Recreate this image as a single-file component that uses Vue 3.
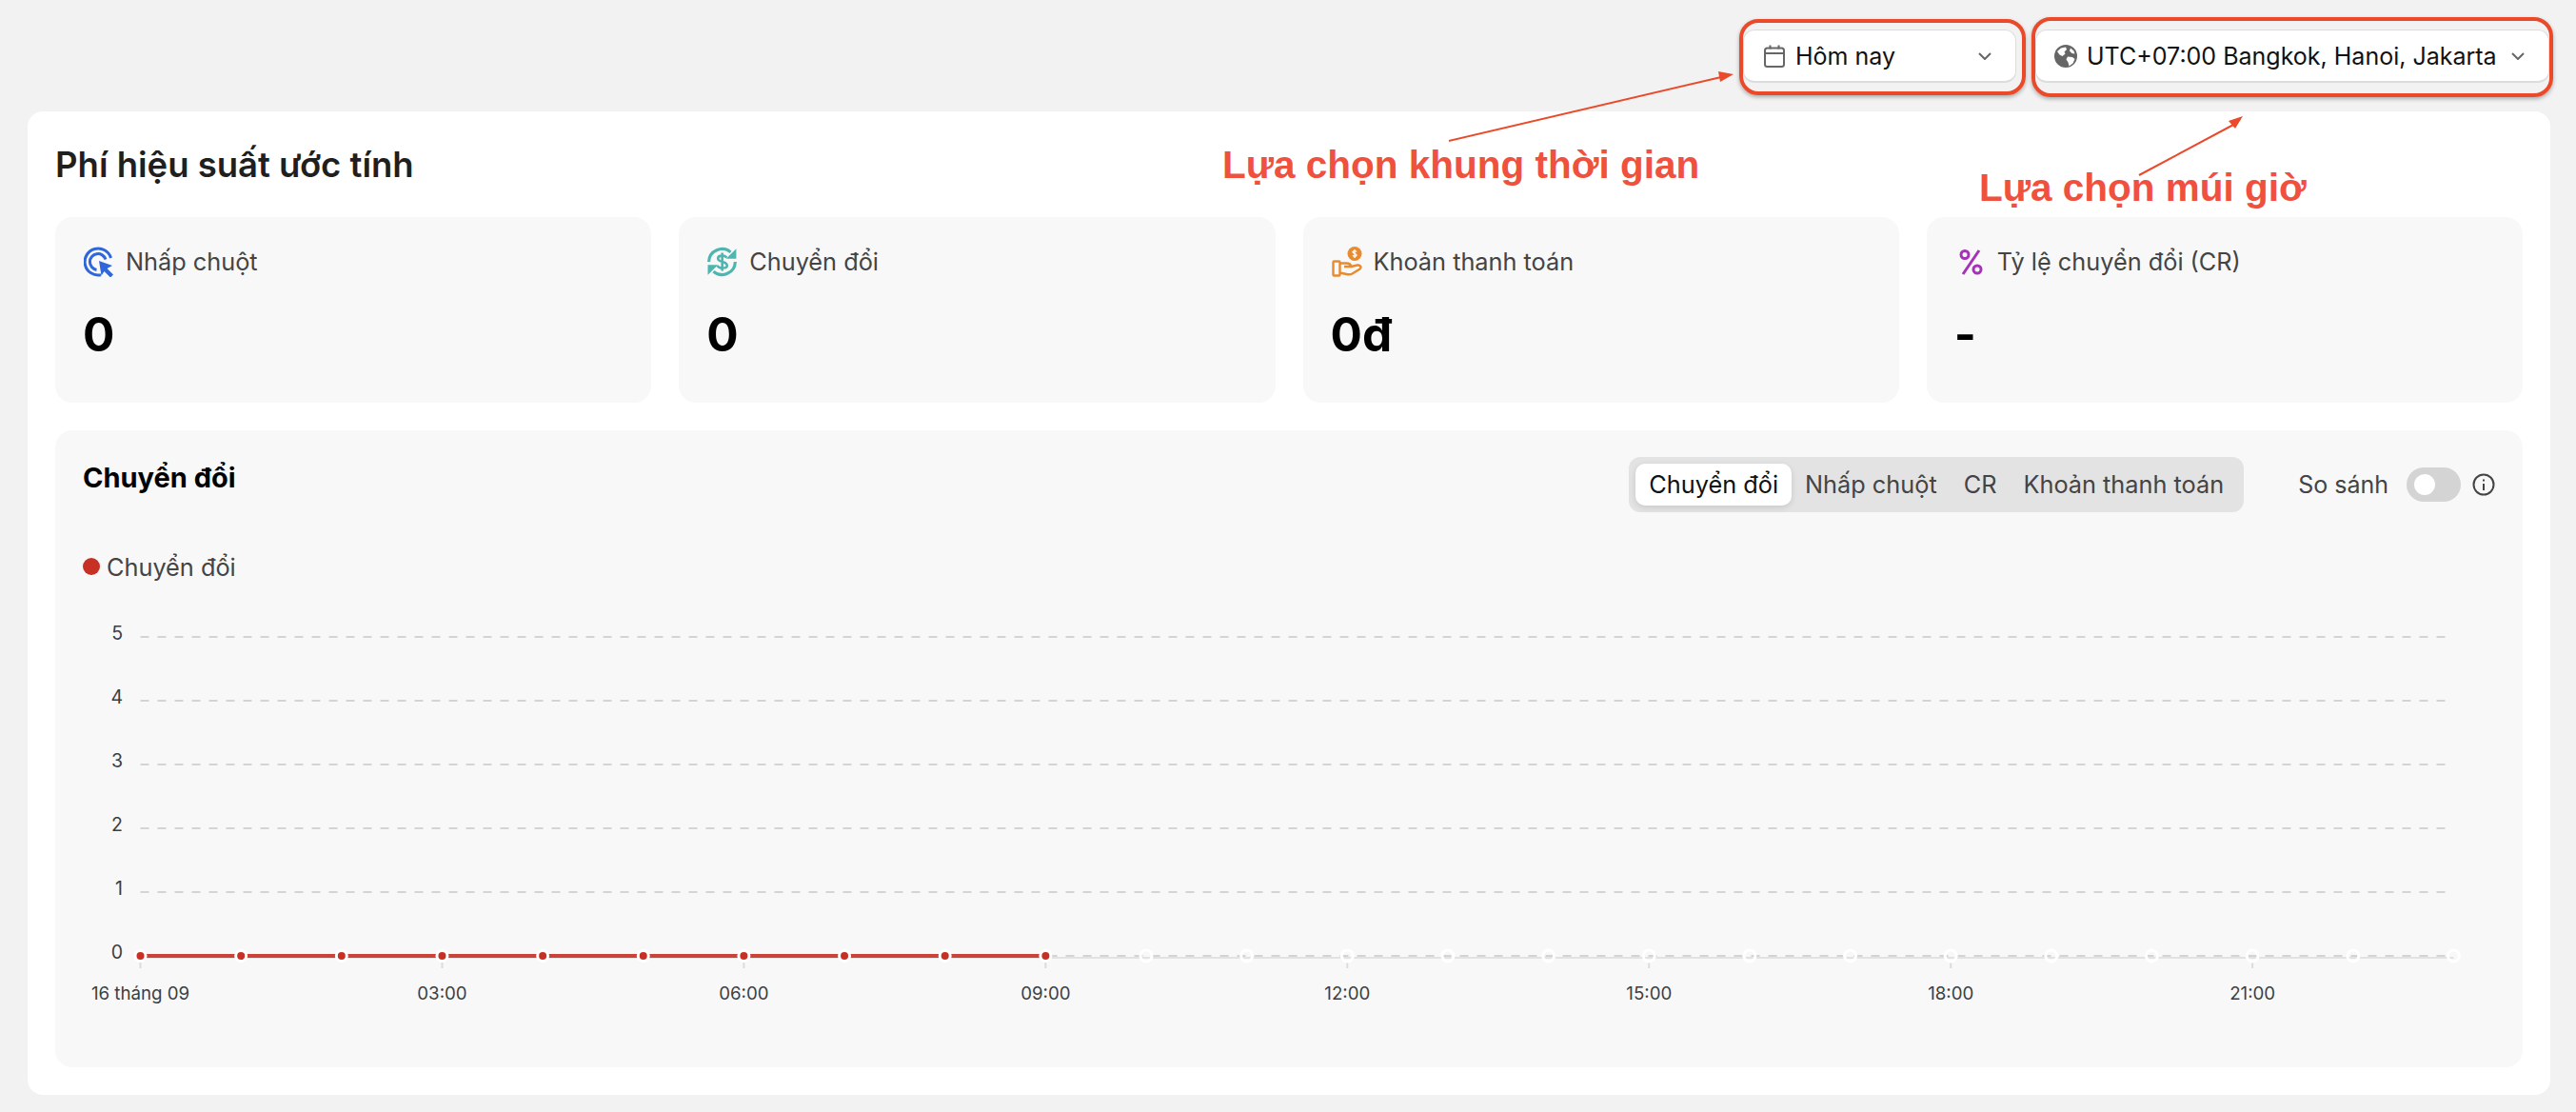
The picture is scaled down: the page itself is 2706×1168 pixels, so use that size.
<script setup>
import { computed } from 'vue';

const stats = [
  { key: 'click', label: 'Nhấp chuột', value: '0' },
  { key: 'convert', label: 'Chuyển đổi', value: '0' },
  { key: 'pay', label: 'Khoản thanh toán', value: '0đ' },
  { key: 'cr', label: 'Tỷ lệ chuyển đổi (CR)', value: '-' },
];

const tabs = ['Chuyển đổi', 'Nhấp chuột', 'CR', 'Khoản thanh toán'];

// chart geometry, in svg units
const plotLeft = 89.5;
const plotStep = 105.65;
const gridEnd = 2512;
const zeroY = 364;
const rowH = 67;
const filled = 10;

const rows = [5, 4, 3, 2, 1, 0].map((n) => ({ n, y: zeroY - n * rowH }));

const points = computed(() =>
  Array.from({ length: 24 }, (_, i) => ({
    i,
    x: plotLeft + i * plotStep,
    on: i < filled,
  })),
);

const ticks = computed(() =>
  points.value
    .filter((p) => p.i % 3 === 0)
    .map((p) => ({
      x: p.x,
      label: p.i === 0 ? '16 tháng 09' : `${String(p.i).padStart(2, '0')}:00`,
    })),
);

const redEnd = computed(() => plotLeft + (filled - 1) * plotStep);
const lastX = computed(() => plotLeft + 23 * plotStep);
</script>

<template>
  <div class="page">
    <header class="topbar">
      <button class="select select--range">
        <svg class="select__icon" viewBox="0 0 24 24" fill="none" stroke="#666" stroke-width="2">
          <rect x="2" y="3.500" width="20" height="19.500" rx="2.500" />
          <path d="M2 9h20M7.500 0.500v4M16.500 0.500v4" />
        </svg>
        <span class="select__text">Hôm nay</span>
        <svg class="select__chev" viewBox="0 0 14 8" fill="none" stroke="#666" stroke-width="2">
          <path d="M1 1l6 6 6-6" />
        </svg>
      </button>
      <button class="select select--zone">
        <svg class="select__icon" viewBox="0 0 24 24">
          <circle cx="12" cy="12" r="12" fill="#666" />
          <path fill="#fff" d="M3 7l4-3.500 5-1 1 2.500-2.500 2.500 1 2-3 2.500-3-1.500zM14 12.500l5 .5 2.500 2-2 4.500-4 3-1-4-2-3zM17 3.500l3.500 3 1 3-3-.5-2.500-2.500z" />
        </svg>
        <span class="select__text">UTC+07:00 Bangkok, Hanoi, Jakarta</span>
        <svg class="select__chev" viewBox="0 0 14 8" fill="none" stroke="#666" stroke-width="2">
          <path d="M1 1l6 6 6-6" />
        </svg>
      </button>
    </header>

    <main class="card">
      <h1 class="card__title">Phí hiệu suất ước tính</h1>

      <section class="stats">
        <div v-for="s in stats" :key="s.key" class="stat">
          <div class="stat__head">
            <svg v-if="s.key === 'click'" class="stat__icon" viewBox="0 0 32 32" fill="none" stroke="#2f66db" stroke-width="3">
              <path d="M28.500 12A14 14 0 1 0 18 29.700" />
              <path d="M23 13.500A8.500 8.500 0 1 0 13.500 24.500" />
              <path fill="#2f66db" stroke="none" d="M16 15l14 5-5.500 3 6.500 6.500-3 3-6.500-6.500-3 4.500z" />
            </svg>
            <svg v-else-if="s.key === 'convert'" class="stat__icon" viewBox="3 1 30 30" fill="none" stroke="#4fb5b0" stroke-width="3">
              <path d="M4.500 16A13 13 0 0 1 26 6.500" />
              <path d="M30.500 16A13 13 0 0 1 9 25.500" />
              <path fill="#4fb5b0" stroke="none" d="M31.500 3v10h-10zM3.500 29V19h10z" />
              <path stroke-width="2.400" d="M22 12c-1-2.500-8.500-3-8.500 .7 0 4 9 2.500 9 6.800 0 3.500-8 3.500-9.500 .2M17.700 7v18" />
            </svg>
            <svg v-else-if="s.key === 'pay'" class="stat__icon" viewBox="0 0 32 32" fill="none" stroke="#e88a2e" stroke-width="2.400">
              <circle cx="24" cy="7.500" r="7.500" fill="#e88a2e" stroke="none" />
              <path stroke="#fff" stroke-width="1.300" d="M26 5.500c-.5-1-4-1.500-4 .3 0 2 4 1.200 4 3.400 0 1.500-3.500 1.300-4 0M24 3v9" />
              <rect x="1.500" y="15.500" width="7" height="15" rx="1" />
              <path d="M8.500 17.500h7c3 0 4.500 1.500 5 3.500H13M20.500 21l6.500-1.500c3-.5 4.500 2 2.500 4l-8 5c-2 1-4 1-6 .5l-7-1.500" />
            </svg>
            <svg v-else class="stat__icon" viewBox="0 0 32 32" fill="none" stroke="#a632b8" stroke-width="3">
              <circle cx="10" cy="8.500" r="4" />
              <circle cx="23" cy="24" r="4" />
              <path d="M25 4L8 29" />
            </svg>
            <span class="stat__label">{{ s.label }}</span>
          </div>
          <div class="stat__value">{{ s.value }}</div>
        </div>
      </section>

      <section class="panel">
        <div class="panel__head">
          <h2 class="panel__title">Chuyển đổi</h2>
          <div class="panel__tools">
            <div class="tabs">
              <span v-for="(t, i) in tabs" :key="t" class="tab" :class="{ 'tab--on': i === 0 }">{{ t }}</span>
            </div>
            <span class="compare">So sánh</span>
            <span class="toggle"><span class="toggle__knob"></span></span>
            <svg class="info" viewBox="0 0 24 24" fill="none" stroke="#444" stroke-width="2">
              <circle cx="12" cy="12" r="10.500" />
              <path d="M12 11v7" />
              <path d="M12 6.500v2" />
            </svg>
          </div>
        </div>

        <div class="legend"><i class="legend__dot"></i>Chuyển đổi</div>

        <svg class="chart" width="2592" height="481" viewBox="0 0 2592 481">
          <g v-for="r in rows" :key="r.n">
            <text class="chart__y" :x="71" :y="r.y + 3">{{ r.n }}</text>
            <line :x1="plotLeft" :x2="r.n === 0 ? lastX : gridEnd" :y1="r.y" :y2="r.y" class="chart__grid" />
          </g>
          <line :x1="plotLeft" :x2="lastX" :y1="zeroY + 2" :y2="zeroY + 2" class="chart__axis" />
          <g v-for="t in ticks" :key="t.label">
            <line :x1="t.x" :x2="t.x" :y1="zeroY + 7" :y2="zeroY + 13" class="chart__tick" />
            <text class="chart__x" :x="t.x" :y="zeroY + 46">{{ t.label }}</text>
          </g>
          <line :x1="plotLeft" :x2="redEnd" :y1="zeroY" :y2="zeroY" class="chart__line" />
          <g v-for="p in points" :key="p.i">
            <circle v-if="p.on" :cx="p.x" :cy="zeroY" r="7" fill="#fff" />
            <circle v-if="p.on" :cx="p.x" :cy="zeroY" r="4" fill="#c63025" />
            <circle v-else :cx="p.x" :cy="zeroY" r="6" fill="none" stroke="#fff" stroke-width="3" />
          </g>
        </svg>
      </section>
    </main>

    <!-- red markup drawn over the screenshot -->
    <div class="mark mark--range"></div>
    <div class="mark mark--zone"></div>
    <svg class="arrows" width="2706" height="1168" viewBox="0 0 2706 1168" fill="none">
      <path d="M1522 148L1808 81" stroke="#ea4a2a" stroke-width="2" />
      <path d="M1821 78l-16-3 2 11z" fill="#ea4a2a" />
      <path d="M2247 184L2348 130" stroke="#ea4a2a" stroke-width="2" />
      <path d="M2356 122l-15 5 7 8z" fill="#ea4a2a" />
    </svg>
    <span class="note note--range">Lựa chọn khung thời gian</span>
    <span class="note note--zone">Lựa chọn múi giờ</span>
  </div>
</template>

<style>
html,
body {
  margin: 0;
  background: #f2f2f2;
}
</style>

<style scoped>
.page {
  position: relative;
  width: 2706px;
  height: 1168px;
  overflow: hidden;
  background: #f2f2f2;
  font-family: Inter, 'Noto Sans', sans-serif;
  color: #444;
}

.topbar {
  display: flex;
  justify-content: flex-end;
  gap: 20px;
  padding: 31px 28px 0 0;
}

.select {
  display: flex;
  align-items: center;
  height: 56px;
  box-sizing: border-box;
  padding: 0;
  background: #fff;
  border: 1px solid #dcdcdc;
  border-bottom-width: 2px;
  border-radius: 12px;
  font: inherit;
  color: #111;
}

.select--range {
  width: 287px;
  padding-left: 20px;
}

.select--zone {
  width: 540px;
  padding-left: 19px;
}

.select__icon {
  flex: none;
  width: 24px;
  height: 24px;
}

.select__text {
  margin-left: 10px;
  font-size: 25px;
  white-space: nowrap;
}

.select__chev {
  flex: none;
  width: 14px;
  height: 8px;
  margin-left: auto;
  margin-right: 25px;
}

.card {
  box-sizing: border-box;
  width: 2650px;
  height: 1033px;
  margin: 30px 0 0 29px;
  padding: 29px;
  background: #fff;
  border-radius: 16px;
}

.card__title {
  margin: 0;
  height: 82px;
  font-size: 36.500px;
  line-height: 54px;
  font-weight: 600;
  color: #1f1f1f;
}

.stats {
  display: grid;
  grid-template-columns: repeat(4, 1fr);
  gap: 29px;
}

.stat {
  box-sizing: border-box;
  height: 195px;
  padding: 31px 30px;
  background: #f8f8f8;
  border-radius: 18px;
}

.stat__head {
  display: flex;
  align-items: center;
  gap: 12px;
}

.stat__icon {
  flex: none;
  width: 32px;
  height: 32px;
}

.stat__label {
  font-size: 25.300px;
  line-height: 32px;
  color: #444;
}

.stat__value {
  margin: 30px 0 0 -1px;
  font-size: 49.500px;
  line-height: 60px;
  font-weight: 700;
  color: #000;
}

.panel {
  display: flex;
  flex-direction: column;
  height: 669px;
  margin-top: 29px;
  background: #f8f8f8;
  border-radius: 18px;
}

.panel__head {
  display: flex;
  justify-content: space-between;
  align-items: flex-start;
  padding: 28px 29px 0 29px;
}

.panel__title {
  margin: 0;
  font-size: 29px;
  line-height: 44px;
  font-weight: 700;
  color: #000;
}

.panel__tools {
  display: flex;
  align-items: center;
  height: 58px;
}

.tabs {
  display: flex;
  align-items: center;
  height: 58px;
  box-sizing: border-box;
  padding: 0 7px;
  background: #e3e3e3;
  border-radius: 12px;
}

.tab {
  padding: 0 14px;
  font-size: 25.300px;
  line-height: 44px;
  color: #444;
  white-space: nowrap;
}

.tab--on {
  background: #fff;
  border-radius: 10px;
  color: #111;
  box-shadow: 0 2px 6px rgba(0, 0, 0, 0.12);
}

.compare {
  margin-left: 57px;
  font-size: 25px;
}

.toggle {
  display: flex;
  align-items: center;
  width: 57px;
  height: 36px;
  margin-left: 19px;
  padding-left: 8px;
  box-sizing: border-box;
  background: #d4d4d4;
  border-radius: 18px;
}

.toggle__knob {
  width: 22px;
  height: 22px;
  background: #fff;
  border-radius: 50%;
}

.info {
  width: 24px;
  height: 24px;
  margin-left: 12px;
}

.legend {
  display: flex;
  align-items: center;
  gap: 7px;
  height: 30px;
  margin: 42px 0 30px 29px;
  font-size: 25.300px;
  color: #444;
}

.legend__dot {
  width: 18px;
  height: 18px;
  background: #c63025;
  border-radius: 50%;
}

.chart {
  display: block;
  flex: none;
}

.chart__y {
  font-size: 19.500px;
  fill: #3a3f44;
  text-anchor: end;
}

.chart__x {
  font-size: 18.700px;
  fill: #3a3f44;
  text-anchor: middle;
}

.chart__grid {
  stroke: #d4d4d4;
  stroke-width: 2;
  stroke-dasharray: 9 9;
}

.chart__axis {
  stroke: #e2e2e2;
  stroke-width: 2;
}

.chart__tick {
  stroke: #dcdcdc;
  stroke-width: 2;
}

.chart__line {
  stroke: #cb4238;
  stroke-width: 4;
}

.mark {
  position: absolute;
  box-sizing: border-box;
  border: 4.500px solid #ea4a2a;
  border-radius: 20px;
  box-shadow: 0 2px 4px rgba(0, 0, 0, 0.3);
  pointer-events: none;
}

.mark--range {
  left: 1827px;
  top: 20px;
  width: 301px;
  height: 80px;
}

.mark--zone {
  left: 2134px;
  top: 18px;
  width: 548px;
  height: 84px;
}

.arrows {
  position: absolute;
  left: 0;
  top: 0;
  pointer-events: none;
}

.note {
  position: absolute;
  font-family: 'Liberation Sans', Arial, sans-serif;
  font-size: 40.500px;
  line-height: 48px;
  font-weight: 700;
  color: #f0513f;
  white-space: nowrap;
}

.note--range {
  left: 1284px;
  top: 149px;
}

.note--zone {
  left: 2079px;
  top: 173px;
}
</style>
